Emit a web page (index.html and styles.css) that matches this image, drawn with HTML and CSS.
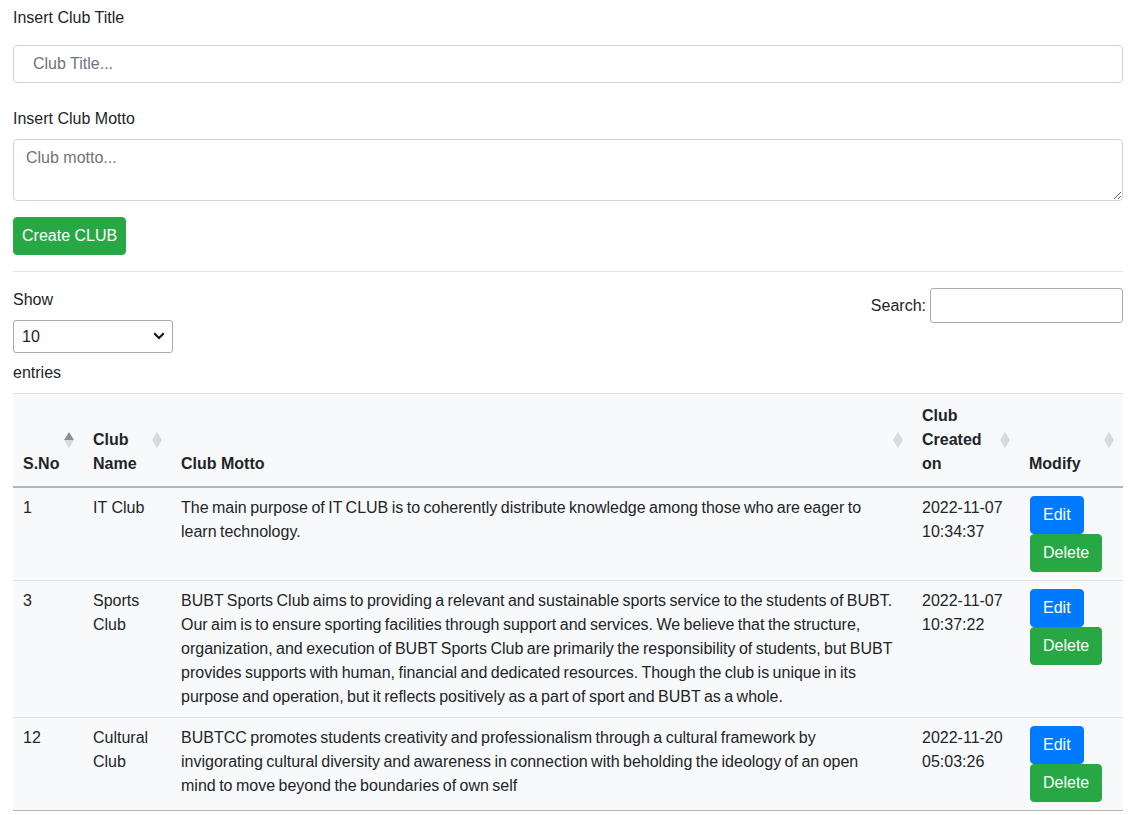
FILE: index.html
```html
<!DOCTYPE html>
<html lang="en">
<head>
<meta charset="utf-8">
<title>Clubs</title>
<link rel="stylesheet" href="styles.css">
</head>
<body>
<form class="club-form">
  <label class="field-label first" for="title">Insert Club Title</label>
  <input id="title" class="form-control title-input" type="text" placeholder="Club Title...">
  <label class="field-label second" for="motto">Insert Club Motto</label>
  <textarea id="motto" class="form-control motto-input" rows="2" placeholder="Club motto..."></textarea>
  <button type="button" class="btn btn-success create-btn">Create CLUB</button>
</form>
<hr class="divider">
<div class="dt-toolbar">
  <div class="dt-length">
    <div class="dt-line">Show</div>
    <div class="select-wrap">
      <select class="dt-select"><option>10</option><option>25</option><option>50</option><option>100</option></select>
      <svg class="chev" width="12" height="8" viewBox="0 0 12 8"><path d="M1.2 1.3 L6 6 L10.8 1.3" fill="none" stroke="#111" stroke-width="2"/></svg>
    </div>
    <div class="dt-line entries">entries</div>
  </div>
  <div class="dt-filter">
    <label for="search">Search:</label>
    <input id="search" class="dt-search" type="search">
  </div>
</div>
<table class="clubs">
  <colgroup>
    <col class="c-sno"><col class="c-name"><col class="c-motto"><col class="c-date"><col class="c-mod">
  </colgroup>
  <thead>
    <tr>
      <th class="sort asc">S.No</th>
      <th class="sort">Club Name</th>
      <th class="sort">Club Motto</th>
      <th class="sort">Club Created on</th>
      <th class="sort">Modify</th>
    </tr>
  </thead>
  <tbody>
    <tr>
      <td>1</td>
      <td>IT Club</td>
      <td class="motto">The main purpose of IT CLUB is to coherently distribute knowledge among those who are eager to learn technology.</td>
      <td>2022-11-07 10:34:37</td>
      <td class="mod"><div class="actions"><button class="btn btn-primary">Edit</button><button class="btn btn-success">Delete</button></div></td>
    </tr>
    <tr>
      <td>3</td>
      <td>Sports Club</td>
      <td class="motto">BUBT Sports Club aims to providing a relevant and sustainable sports service to the students of BUBT. Our aim is to ensure sporting facilities through support and services. We believe that the structure, organization, and execution of BUBT Sports Club are primarily the responsibility of students, but BUBT provides supports with human, financial and dedicated resources. Though the club is unique in its purpose and operation, but it reflects positively as a part of sport and BUBT as a whole.</td>
      <td>2022-11-07 10:37:22</td>
      <td class="mod"><div class="actions"><button class="btn btn-primary">Edit</button><button class="btn btn-success">Delete</button></div></td>
    </tr>
    <tr>
      <td>12</td>
      <td>Cultural Club</td>
      <td class="motto">BUBTCC promotes students creativity and professionalism through a cultural framework by invigorating cultural diversity and awareness in connection with beholding the ideology of an open mind to move beyond the boundaries of own self</td>
      <td>2022-11-20 05:03:26</td>
      <td class="mod"><div class="actions"><button class="btn btn-primary">Edit</button><button class="btn btn-success">Delete</button></div></td>
    </tr>
  </tbody>
</table>
</body>
</html>
```
FILE: styles.css
```css
* { box-sizing: border-box; }
html, body { background: #fff; }
body {
  margin: 0;
  padding: 6px 13px 0;
  font-family: "Liberation Sans", Arial, sans-serif;
  font-size: 16px;
  line-height: 24px;
  color: #212529;
}
.club-form { display: flex; flex-direction: column; align-items: flex-start; }
.field-label { display: block; }
.field-label.first { margin-bottom: 15px; }
.field-label.second { margin-top: 24px; margin-bottom: 8px; }
.form-control {
  display: block;
  width: 100%;
  font-family: inherit;
  font-size: 16px;
  line-height: 24px;
  color: #495057;
  background: #fff;
  border: 1px solid #ced4da;
  border-radius: 4px;
  margin: 0;
}
.form-control::placeholder { color: #6c757d; opacity: 1; }
.title-input { height: 38px; padding: 6px 19px; }
.motto-input { height: 62px; padding: 6px 12px; resize: vertical; }
.btn {
  display: inline-block;
  font-family: inherit;
  font-size: 16px;
  line-height: 24px;
  padding: 6px 12px;
  border: 1px solid transparent;
  border-radius: 4px;
  color: #fff;
  cursor: pointer;
  margin: 0;
}
.btn-success { background: #28a745; border-color: #28a745; }
.btn-primary { background: #007bff; border-color: #007bff; }
.create-btn { margin-top: 16px; padding: 6px 8px; }
.divider {
  margin: 16px 0;
  border: 0;
  border-top: 1px solid rgba(0, 0, 0, 0.1);
  height: 0;
}
.dt-toolbar { display: flex; justify-content: space-between; align-items: flex-start; }
.dt-length { display: flex; flex-direction: column; align-items: flex-start; }
.select-wrap { position: relative; margin-top: 8px; }
.dt-select {
  display: block;
  width: 160px;
  height: 33px;
  padding: 4px 8px;
  font-family: inherit;
  font-size: 16px;
  color: #212529;
  background: transparent;
  border: 1px solid #aaa;
  border-radius: 3px;
  -webkit-appearance: none;
  appearance: none;
}
.chev { position: absolute; right: 8px; top: 12px; pointer-events: none; }
.entries { margin-top: 8px; }
.dt-filter { display: flex; align-items: center; }
.dt-search {
  width: 193px;
  height: 35px;
  margin-left: 4px;
  padding: 5px;
  font-family: inherit;
  font-size: 16px;
  border: 1px solid #aaa;
  border-radius: 3px;
  background: transparent;
}
.clubs {
  width: 100%;
  margin-top: 8px;
  table-layout: fixed;
  border-collapse: separate;
  border-spacing: 0;
  background: #f8f9fa;
}
.c-sno { width: 70px; }
.c-name { width: 88px; }
.c-motto { width: 741px; }
.c-date { width: 107px; }
.c-mod { width: 104px; }
.clubs th {
  position: relative;
  text-align: left;
  vertical-align: bottom;
  font-weight: bold;
  padding: 10px 26px 10px 10px;
  border-top: 1px solid #dee2e6;
  border-bottom: 2px solid #b4b5b6;
  white-space: normal;
}
.clubs th.sort::before,
.clubs th.sort::after {
  content: "";
  position: absolute;
  right: 9px;
  width: 0;
  height: 0;
  border-left: 5px solid transparent;
  border-right: 5px solid transparent;
}
.clubs th.sort::before { bottom: 50%; border-bottom: 8px solid rgba(33, 37, 41, 0.14); }
.clubs th.sort::after { top: 50%; border-top: 8px solid rgba(33, 37, 41, 0.14); }
.clubs th.sort.asc::before { border-bottom-color: rgba(33, 37, 41, 0.5); }
.clubs td {
  vertical-align: top;
  padding: 8px 10px;
  border-top: 1px solid #dee2e6;
}
.clubs tbody tr:first-child td { border-top: 0; }
.clubs tbody tr:last-child td { border-bottom: 1px solid #b4b5b6; }
.clubs td.motto { padding-right: 18px; word-spacing: -1px; }
.clubs td.mod { padding-left: 11px; }
.actions { display: flex; flex-wrap: wrap; align-items: flex-start; }
```
